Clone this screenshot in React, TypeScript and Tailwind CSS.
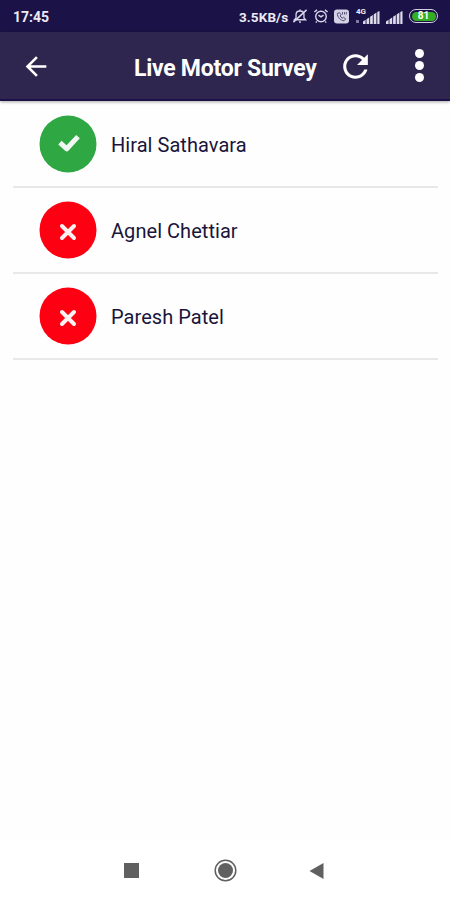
const surveyors = [
  { name: "Hiral Sathavara", done: true },
  { name: "Agnel Chettiar", done: false },
  { name: "Paresh Patel", done: false },
];

function MutedBell() {
  return (
    <svg className="h-4 w-4" viewBox="0 0 17 17" fill="none" stroke="#d9d5ea" strokeWidth="1.4">
      <path d="M2.500 12.500h12l-1.800-2V7c0-2.300-1.500-3.800-4.200-3.800S4.300 4.700 4.300 7v3.500z" />
      <path d="M7.500 14.800h2M8.500 1.500v1.500M1.500 15 15.500 2" strokeWidth="1.600" />
    </svg>
  );
}

function AlarmClock() {
  return (
    <svg className="h-4 w-4" viewBox="0 0 17 17" fill="none" stroke="#d9d5ea" strokeWidth="1.5">
      <circle cx="8.500" cy="9" r="5.600" />
      <path d="M5.800 7.500 8.500 9.500l2.700-2M1.500 4.300 4.300 2M12.700 2l2.800 2.300M4 14.300l-1 1.200M13 14.300l1 1.200" />
    </svg>
  );
}

function VolteBadge() {
  return (
    <svg className="h-[15px] w-[15px]" viewBox="0 0 15 15">
      <rect width="15" height="14" y="0.500" rx="3" fill="#d5d1e4" />
      <path d="M3.300 4.500c0 3.600 3.200 7 6.700 7.300l1.700-1.900-2.200-1.600-1.400.9-2-2.200 1-1.400-1.700-2z" fill="none" stroke="#514875" strokeWidth="1" />
      <path d="M8.500 3v2.500M10.500 3v2.500M12.300 3v2.500" stroke="#514875" strokeWidth="0.900" />
    </svg>
  );
}

function SignalBars() {
  return (
    <svg className="h-[13px] w-[17px]" viewBox="0 0 17 13" fill="#dedbea">
      <path d="M0 10.500 2.600 8.800V13H0zM3.500 8.200 6.200 6.400V13H3.500zM7.100 5.800 9.800 4V13H7.100zM10.700 3.400 13.400 1.600V13h-2.700zM14.300 1 16.500 0v13h-2.200z" />
    </svg>
  );
}

function StatusBar() {
  return (
    <div className="flex h-8 items-center bg-[#1b1247] pl-[13px] pr-[12px] text-[#eceaf5]">
      <span className="mt-[2px] text-[14px] font-bold">17:45</span>
      <span className="ml-auto mt-[2px] w-[50px] whitespace-nowrap text-[13.500px] font-bold tracking-[0.100px]">3.5KB/s</span>
      <div className="ml-[3px] flex items-center gap-[5px]">
        <MutedBell />
        <AlarmClock />
        <VolteBadge />
      </div>
      <div className="ml-[7px] flex h-4 w-[24px] items-end justify-end">
        <div className="flex h-full w-[7px] flex-col justify-between">
          <span className="text-[8px] font-bold leading-[7px]">4G</span>
          <span className="mb-[1px] h-[3px] w-[3px] bg-[#827b9e]" />
        </div>
        <SignalBars />
      </div>
      <div className="ml-[6px] flex h-4 items-end">
        <SignalBars />
      </div>
      <div className="ml-[6px] flex h-[14px] w-[29px] items-center justify-center rounded-full border-[1.500px] border-[#d2d0e1] p-[1.500px]">
        <span className="flex h-full w-full items-center justify-center rounded-full bg-[#34ae24] text-[10px] font-bold leading-none text-white">
          81
        </span>
      </div>
    </div>
  );
}

function StatusIcon({ done }: { done: boolean }) {
  return (
    <svg className="h-[58px] w-[58px] shrink-0" viewBox="0 0 58 58">
      <circle cx="29" cy="29" r="28.500" fill={done ? "#2fa843" : "#fd0012"} />
      {done ? (
        <path d="M22.800 29.300 27.800 33.800 37.300 23.500" fill="none" stroke="#f1f8f1" strokeWidth="5" strokeLinecap="square" strokeLinejoin="round" />
      ) : (
        <path d="m23 25 12 12m0-12L23 37" fill="none" stroke="#fff1f1" strokeWidth="4" strokeLinecap="round" />
      )}
    </svg>
  );
}

export default function App() {
  return (
    <div className="flex h-[900px] w-[450px] flex-col overflow-hidden bg-[#fefefe] font-[Roboto,sans-serif]">
      <StatusBar />

      <header className="flex h-[69px] shrink-0 items-center border-b-2 border-[#1b1247] bg-[#2e264f] text-white shadow-[0_1px_3px_rgba(0,0,0,0.35)]">
        <svg className="ml-[20px] mt-[2px] h-[31px] w-8" viewBox="0 0 24 24" fill="currentColor">
          <path d="M20 11H7.830l5.590-5.590L12 4l-8 8 8 8 1.410-1.410L7.830 13H20v-2z" />
        </svg>
        <h1 className="ml-[82px] mt-[8px] w-[184px] whitespace-nowrap text-[23px] font-bold tracking-[-0.260px]">
          Live Motor Survey
        </h1>
        <svg className="ml-[19px] mt-[2px] h-[37px] w-[37px]" viewBox="0 0 24 24" fill="currentColor">
          <path d="M17.650 6.350C16.200 4.900 14.210 4 12 4c-4.420 0-7.990 3.580-7.990 8s3.570 8 7.990 8c3.730 0 6.840-2.550 7.730-6h-2.080c-.82 2.330-3.040 4-5.650 4-3.310 0-6-2.690-6-6s2.690-6 6-6c1.660 0 3.140.69 4.220 1.780L13 11h7V4l-2.350 2.350z" />
        </svg>
        <div className="ml-[41px] flex flex-col gap-[3px]">
          <span className="h-[9px] w-[9px] rounded-full bg-white" />
          <span className="h-[9px] w-[9px] rounded-full bg-white" />
          <span className="h-[9px] w-[9px] rounded-full bg-white" />
        </div>
      </header>

      <main className="flex-1 pl-[13px] pr-[12px] pt-[1px]">
        {surveyors.map((person) => (
          <div key={person.name} className="flex h-[86px] items-center border-b-2 border-[#e8e8e8] pl-[26px]">
            <StatusIcon done={person.done} />
            <span className="ml-[14px] mt-px text-[20px] tracking-[0.05px] text-[#19153b]">
              {person.name}
            </span>
          </div>
        ))}
      </main>

      <nav className="flex h-[59px] shrink-0 items-center bg-white pl-[124px] text-[#606060]">
        <span className="h-[15px] w-[15px] bg-current" />
        <svg className="ml-[75px] h-[23px] w-[23px]" viewBox="0 0 23 23">
          <circle cx="11.500" cy="11.500" r="10.300" fill="none" stroke="currentColor" strokeWidth="1.500" />
          <circle cx="11.500" cy="11.500" r="7.500" fill="currentColor" />
        </svg>
        <svg className="ml-[72px] h-4 w-[15px]" viewBox="0 0 15 16" fill="currentColor">
          <path d="M14.500 0v16L.5 8z" />
        </svg>
      </nav>
    </div>
  );
}
